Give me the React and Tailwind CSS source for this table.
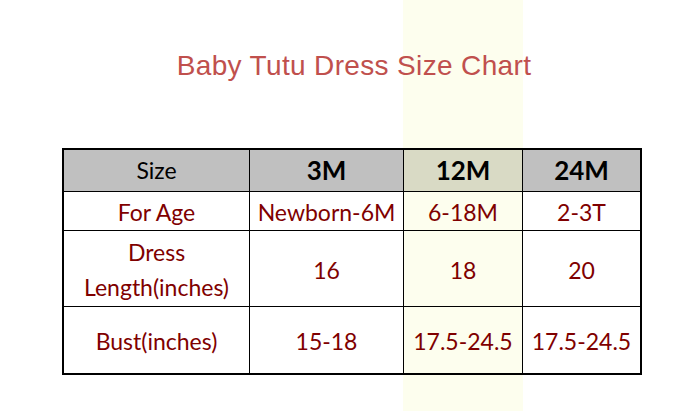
import React from "react";

// Size chart rows
const rows = [
  { label: ["For Age"], cells: ["Newborn-6M", "6-18M", "2-3T"] },
  { label: ["Dress", "Length(inches)"], cells: ["16", "18", "20"] },
  { label: ["Bust(inches)"], cells: ["15-18", "17.5-24.5", "17.5-24.5"] },
];

const sizes = ["3M", "12M", "24M"];

const App = () => {
  return (
    <div className="w-[693px] h-[411px] bg-[linear-gradient(to_right,#ffffff_403px,#fdfeee_403px,#fdfeee_523px,#ffffff_523px)] font-['Lato',sans-serif]">
      {/* Title */}
      <h1 className="pt-[52px] pl-[15px] text-center text-[28px] leading-[28px] tracking-[0.35px] text-[#c0504d] font-['Liberation_Sans',Arial,sans-serif]">
        Baby Tutu Dress Size Chart
      </h1>

      {/* Table */}
      <div className="mt-[68px] ml-[62px] w-[580px] border-2 border-black bg-black grid grid-cols-[185px_153px_118px_117px] grid-rows-[41px_38px_75px_66px] gap-px">
        <div className="bg-[#c0c0c0] flex items-center justify-center text-[23px] text-black">Size</div>
        {sizes.map((s, i) => (
          <div
            key={s}
            className={`${i === 1 ? "bg-[#d9dac5]" : "bg-[#c0c0c0]"} flex items-center justify-center text-[26px] font-bold text-black`}
          >
            {s}
          </div>
        ))}

        {rows.map((row) => (
          <React.Fragment key={row.label.join(" ")}>
            <div className="bg-white flex flex-col items-center justify-center pt-[3px] text-[23px] leading-[35px] text-[#7f0000]">
              {row.label.map((l) => (
                <span key={l}>{l}</span>
              ))}
            </div>
            {row.cells.map((c, i) => (
              <div
                key={i}
                className={`${i === 1 ? "bg-[#fdfeee]" : "bg-white"} flex items-center justify-center pt-[3px] text-[23px] text-[#7f0000] whitespace-nowrap`}
              >
                {c}
              </div>
            ))}
          </React.Fragment>
        ))}
      </div>
    </div>
  );
};

export default App;
